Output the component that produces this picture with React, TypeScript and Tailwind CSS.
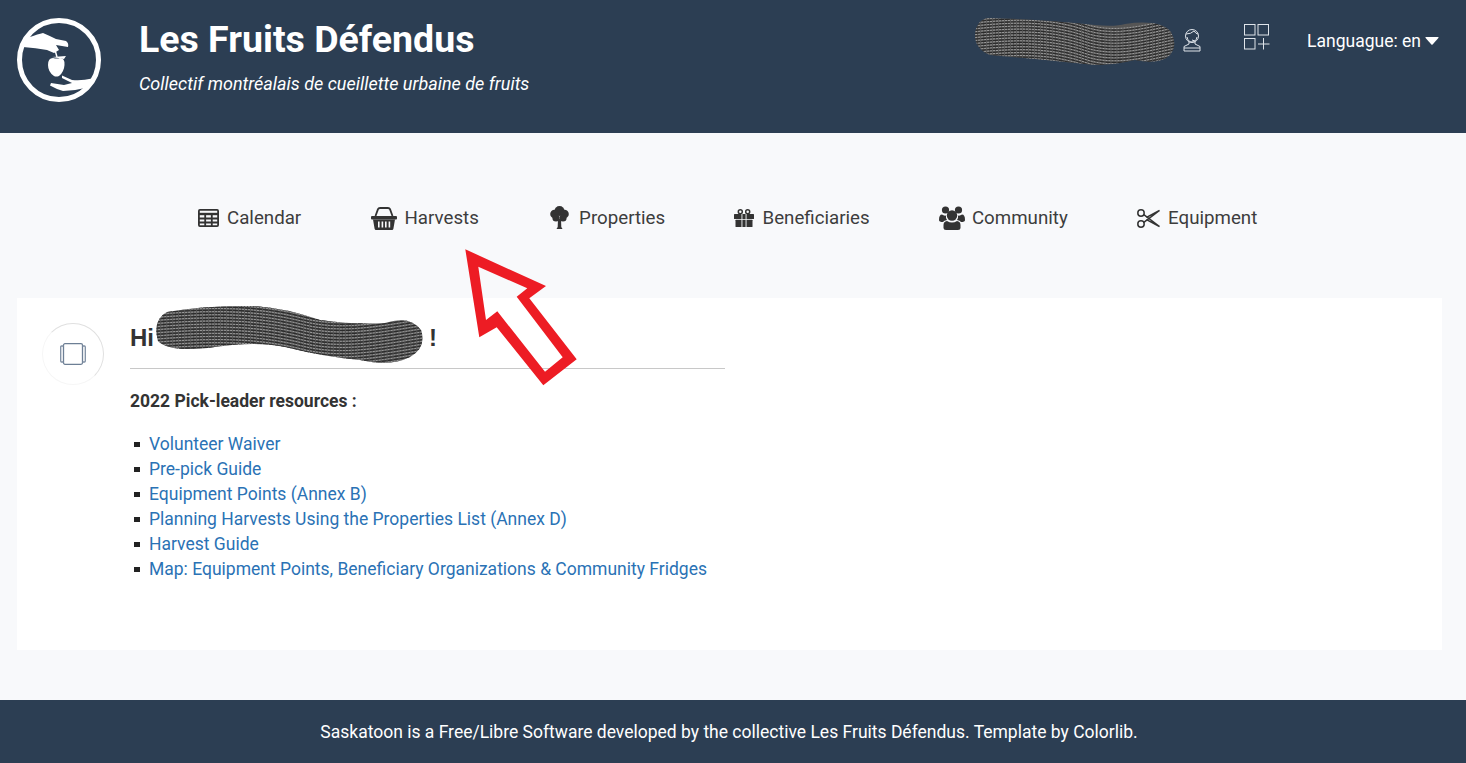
const links = [
  "Volunteer Waiver",
  "Pre-pick Guide",
  "Equipment Points (Annex B)",
  "Planning Harvests Using the Properties List (Annex D)",
  "Harvest Guide",
  "Map: Equipment Points, Beneficiary Organizations & Community Fridges",
];

function Logo() {
  return (
    <svg width="90" height="90" viewBox="14 15 90 90" className="shrink-0">
      <circle cx="59" cy="60" r="39.5" fill="none" stroke="white" strokeWidth="5" />
      <path d="M23 38 L30 37 Q38 34 43 33 Q50 36 56 39 L66 41 Q69 43 68 47 L56 45 L59 50 L54 53 L47 50 Q36 48 23 47 Z" fill="white" />
      <path d="M55 50 L57 57" fill="none" stroke="white" strokeWidth="1.5" />
      <path d="M52 57 L66 56 L64 59 Z" fill="white" />
      <path d="M53 58 Q57 59 60 58 Q65 58 64.5 65 Q64 72 59 76 Q56 77 54 76 Q48 72 48 65 Q48 58 53 58 Z" fill="white" />
      <path d="M62 75.5 L72 80 Q82 81 92 78.5 L94 80 Q90 85 85 88 Q74 91 63 91 Q56 89 50 85.5 L51 83 L64 85 L72 83 L62 78 Z" fill="white" />
    </svg>
  );
}

function Scribble({ width, height, shape, lines }: { width: number; height: number; shape: string; lines: number }) {
  const id = `clip${width}`;
  return (
    <svg width={width} height={height} viewBox={`0 0 ${width} ${height}`} className="block">
      <defs>
        <clipPath id={id}>
          <path d={shape} />
        </clipPath>
      </defs>
      <path d={shape} fill="#555" />
      <g clipPath={`url(#${id})`} fill="none">
        {Array.from({ length: lines }).map((_, i) => {
          const y = (i * height) / lines;
          const d = `M0 ${y} C${width * 0.25} ${y - 5} ${width * 0.4} ${y - 3} ${width * 0.55} ${y + 7} S${width * 0.85} ${y + 8} ${width} ${y + 2}`;
          return (
            <g key={i}>
              <path d={d} stroke="#9c9c9c" strokeWidth="1" strokeDasharray="2 1" />
              <path d={d} stroke="#2b2b2b" strokeWidth="1.2" strokeDasharray="5 1" transform="translate(0 1.6)" />
            </g>
          );
        })}
      </g>
    </svg>
  );
}

function TableIcon() {
  return (
    <svg width="21" height="18" viewBox="0 0 21 18" fill="none" stroke="#333" strokeWidth="1.8">
      <rect x="0.9" y="0.9" width="19.2" height="16.2" rx="1" />
      <path d="M1 5 H20" strokeWidth="2.4" />
      <path d="M1 9.5 H20 M1 13.5 H20 M7.2 5 V17 M13.8 5 V17" />
    </svg>
  );
}

function BasketIcon() {
  return (
    <svg width="26" height="23" viewBox="0 0 26 23" fill="#333">
      <path d="M4.5 9 L7 2.2 Q7.5 1 9 1 H17 Q18.5 1 19 2.2 L21.5 9" fill="none" stroke="#333" strokeWidth="1.8" />
      <rect x="0" y="9" width="26" height="3.4" rx="1" />
      <path d="M2 12.4 H24 L22.4 21.8 Q22.2 23 21 23 H5 Q3.8 23 3.6 21.8 Z" />
      <g fill="#f8f9fb">
        <rect x="7" y="14.5" width="1.6" height="6" />
        <rect x="10.6" y="14.5" width="1.6" height="6" />
        <rect x="14" y="14.5" width="1.6" height="6" />
        <rect x="17.6" y="14.5" width="1.6" height="6" />
      </g>
    </svg>
  );
}

function TreeIcon() {
  return (
    <svg width="19" height="23" viewBox="0 0 19 23" fill="#333" className="mb-[2px]">
      <circle cx="9.5" cy="5" r="5" />
      <circle cx="4.5" cy="8" r="4.3" />
      <circle cx="14.5" cy="8" r="4.3" />
      <circle cx="6" cy="12" r="3.6" />
      <circle cx="13" cy="12" r="3.6" />
      <path d="M8 13 H11 L11.3 21 L12.5 23 H6.5 L7.7 21 Z" />
    </svg>
  );
}

function GiftIcon() {
  return (
    <svg width="20" height="18" viewBox="0 0 20 18" fill="#333">
      <circle cx="6.3" cy="2.8" r="2" fill="none" stroke="#333" strokeWidth="1.5" />
      <circle cx="13.7" cy="2.8" r="2" fill="none" stroke="#333" strokeWidth="1.5" />
      <rect x="0" y="5" width="20" height="5" rx="0.5" />
      <rect x="1.5" y="10.8" width="17" height="7.2" rx="0.5" />
      <g fill="#f8f9fb">
        <rect x="7.5" y="5" width="0.9" height="13" />
        <rect x="11.6" y="5" width="0.9" height="13" />
      </g>
    </svg>
  );
}

function UsersIcon() {
  return (
    <svg width="26" height="24" viewBox="0 0 26 24" fill="#333">
      <circle cx="6.5" cy="4" r="3.6" />
      <circle cx="19.5" cy="4" r="3.6" />
      <path d="M0 14 Q0 8.5 3 8.5 Q5 10 7 9.5 Q6.5 12 8 14 Q5 14.5 4 16 Q0 16 0 14 Z" />
      <path d="M26 14 Q26 8.5 23 8.5 Q21 10 19 9.5 Q19.5 12 18 14 Q21 14.5 22 16 Q26 16 26 14 Z" />
      <circle cx="13" cy="9.5" r="5.2" />
      <path d="M4.5 22 V19 Q4.5 15.5 8 15 Q13 18 18 15 Q21.5 15.5 21.5 19 V22 Q21.5 24 19 24 H7 Q4.5 24 4.5 22 Z" />
    </svg>
  );
}

function ScissorsIcon() {
  return (
    <svg width="23" height="19" viewBox="0 0 23 19" fill="none" stroke="#333" strokeWidth="1.5">
      <circle cx="4" cy="4" r="3.2" />
      <circle cx="4" cy="15" r="3.2" />
      <path d="M6.8 5.6 L22.5 17.5 L9.5 10.6" />
      <path d="M6.8 13.4 L22.5 1.5 L9.5 8.4" />
    </svg>
  );
}

function NavItem({ icon, label, gap }: { icon: React.ReactNode; label: string; gap: string }) {
  return (
    <a className={`flex items-center ${gap} text-[18.72px] text-[#3d3d3d]`}>
      {icon}
      {label}
    </a>
  );
}

export default function App() {
  return (
    <div className="relative flex min-h-[763px] flex-col overflow-hidden bg-[#f8f9fb] font-['Roboto',sans-serif]">
      <header className="flex h-[133px] bg-[#2c3e53] pl-[14px] text-white">
        <div className="mt-[15px]">
          <Logo />
        </div>
        <div className="ml-[35px] mt-[17px]">
          <h1 className="text-[37.5px] leading-[44px] font-bold">Les Fruits Défendus</h1>
          <p className="mt-[12px] text-[18px] leading-[22px] italic">Collectif montréalais de cueillette urbaine de fruits</p>
        </div>
        <div className="ml-auto mr-[27px] mt-[17px] flex h-[50px] items-center">
          <Scribble
            width={200}
            height={50}
            lines={17}
            shape="M12 1 Q60 2 120 8 Q140 10 150 7 Q185 2 196 15 Q203 28 195 38 Q185 48 160 43 Q130 50 110 47 Q60 42 15 38 Q0 32 0 18 Q1 4 12 1 Z"
          />
          <svg width="20" height="24" viewBox="0 0 20 24" fill="none" stroke="#dfe4ea" strokeWidth="1" className="mb-[5px] ml-[7px]">
            <circle cx="10" cy="8" r="6.5" />
            <path d="M4 6 Q9 6 12 3 Q14 6 16 6 M5 9 Q6 14 10 14 Q14 14 15 9 M13 13 L10 12" />
            <path d="M7 14 V16 L2 18.5 V23 H18 V18.5 L13 16 V14 M2 20 H18" />
          </svg>
          <svg width="26" height="26" viewBox="0 0 26 26" fill="none" stroke="#dfe4ea" strokeWidth="1" className="mb-[10px] ml-[42px]">
            <rect x="0.5" y="0.5" width="10.5" height="10.5" />
            <rect x="14" y="0.5" width="10.5" height="10.5" />
            <rect x="0.5" y="14.5" width="10.5" height="10.5" />
            <path d="M14 20 H25.5 M19.5 14 V25.5" />
          </svg>
          <span className="mb-[2px] ml-[37px] flex items-center text-[17.5px]">
            Languague: en
            <svg width="14" height="8" viewBox="0 0 14 8" fill="white" className="ml-[4px]">
              <path d="M1 0 H13 Q14 0 13.4 1 L7.6 7.6 Q7 8 6.4 7.6 L0.6 1 Q0 0 1 0 Z" />
            </svg>
          </span>
        </div>
      </header>

      <nav className="ml-[198px] mt-[71px] flex h-[28px] items-center gap-[69.3px]">
        <NavItem icon={<TableIcon />} label="Calendar" gap="gap-[8px]" />
        <NavItem icon={<BasketIcon />} label="Harvests" gap="gap-[8px]" />
        <NavItem icon={<TreeIcon />} label="Properties" gap="gap-[10px] ml-[2px]" />
        <NavItem icon={<GiftIcon />} label="Beneficiaries" gap="gap-[8px]" />
        <NavItem icon={<UsersIcon />} label="Community" gap="gap-[7px]" />
        <NavItem icon={<ScissorsIcon />} label="Equipment" gap="gap-[8px]" />
      </nav>

      <main className="ml-[17px] mr-[24px] mt-[66px] flex h-[352px] bg-white pl-[25px] pt-[25px]">
        <div className="relative flex h-[62px] w-[62px] shrink-0 items-center justify-center rounded-full border border-[#e0e0e0] [border-bottom-color:#f6f6f6] [border-left-color:#f6f6f6]">
          <svg width="26" height="22" viewBox="0 0 26 22" fill="none" stroke="#7f8fa3" strokeWidth="1.3">
            <rect x="3.5" y="0.7" width="19" height="20.6" rx="1.5" stroke="#6d7f95" />
            <path d="M3.5 3 H1.5 Q0.7 3 0.7 4 V18 Q0.7 19 1.5 19 H3.5 M22.5 3 H24.5 Q25.3 3 25.3 4 V18 Q25.3 19 24.5 19 H22.5" />
          </svg>
        </div>
        <div className="ml-[26px] w-[595px] text-[#333]">
          <div className="h-[46px] border-b border-[#c8c8c8] pt-[1px] font-['Liberation_Sans',sans-serif] text-[24px] leading-[28px] font-bold">
            <div className="flex w-[307px] justify-between">
              <span>Hi</span>
              <span>!</span>
            </div>
          </div>
          <p className="mt-[21px] text-[17.5px] leading-[22px] font-bold">2022 Pick-leader resources :</p>
          <ul className="mt-[20px]">
            {links.map((l) => (
              <li key={l} className="flex h-[25px] items-center text-[17.5px] text-[#2a72b5]">
                <span className="ml-[4px] mr-[9px] h-[5px] w-[6px] bg-[#222]" />
                <a>{l}</a>
              </li>
            ))}
          </ul>
        </div>
      </main>

      <footer className="mt-[50px] flex h-[63px] items-center justify-center bg-[#2c3e53] pr-[8px] pt-[2px] text-[17.5px] text-white">
        Saskatoon is a Free/Libre Software developed by the collective Les Fruits Défendus. Template by Colorlib.
      </footer>

      <div className="absolute left-[155px] top-[305px]">
        <Scribble
          width={268}
          height={62}
          lines={20}
          shape="M12 7 Q50 0 100 1 Q130 3 165 15 Q200 20 230 18 Q255 10 266 25 Q272 42 255 52 Q235 62 205 55 Q170 52 130 42 Q100 36 60 42 Q15 48 3 36 Q-3 15 12 7 Z"
        />
      </div>

      <svg width="140" height="160" viewBox="460 240 140 160" className="absolute left-[460px] top-[240px]">
        <path
          fillRule="evenodd"
          fill="#ed1c24"
          d="M465.3 249.3 L546 286 L529.3 298.3 L576.7 359.3 L543.3 385.3 L496.7 327.3 L479.3 337.3 Z M478.3 266.7 L486 320 L497.3 311.3 L545 371.7 L562.7 357.3 L516.7 296.7 L527.3 288.3 Z"
        />
      </svg>
    </div>
  );
}
